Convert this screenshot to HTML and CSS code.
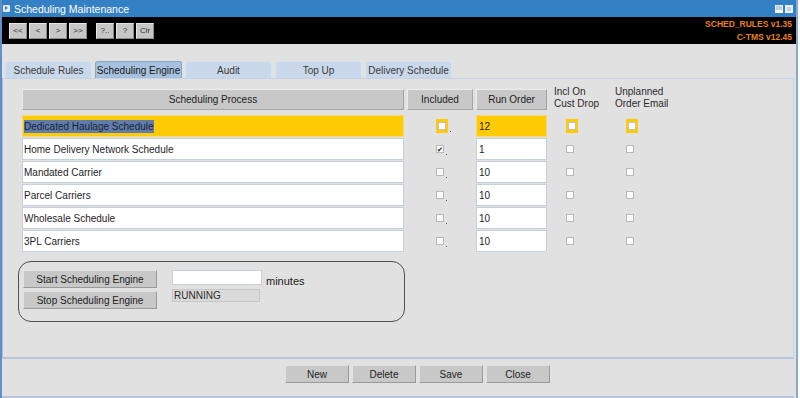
FILE: index.html
```html
<!DOCTYPE html>
<html lang="en">

<head>
    <meta charset="UTF-8">
    <meta name="viewport" content="width=device-width, initial-scale=1.0">
    <title>Scheduling Maintenance</title>
    <link rel="stylesheet" href="styles.css">
</head>

<body>

    <div class="window">
        <div class="titlebar">
            <span class="app-icon"><span class="app-arrow"></span></span>
            <span class="title">Scheduling Maintenance</span>
            <span class="controls">
                <span class="ctl ctl-min"></span>
                <span class="ctl ctl-max"></span>
            </span>
        </div>

        <div class="toolbar">
            <div class="tool-group">
                <button class="tool">&lt;&lt;</button>
                <button class="tool">&lt;</button>
                <button class="tool">&gt;</button>
                <button class="tool">&gt;&gt;</button>
            </div>
            <div class="tool-group">
                <button class="tool">?..</button>
                <button class="tool">?</button>
                <button class="tool">Clr</button>
            </div>
            <div class="version">
                <div>SCHED_RULES v1.35</div>
                <div>C-TMS v12.45</div>
            </div>
        </div>

        <div class="content">
            <div class="tabs">
                <div class="tab">Schedule Rules</div>
                <div class="tab active">Scheduling Engine</div>
                <div class="tab">Audit</div>
                <div class="tab">Top Up</div>
                <div class="tab">Delivery Schedule</div>
            </div>

            <div class="panel">
                <div class="grid">
                    <div class="head">Scheduling Process</div>
                    <div class="head">Included</div>
                    <div class="head">Run Order</div>
                    <div class="head-text incl">Incl On<br>Cust Drop</div>
                    <div class="head-text unpl">Unplanned<br>Order Email</div>

                    <div class="field current"><span class="selected">Dedicated Haulage Schedule</span></div>
                    <div class="cell-inc"><span class="check focus"></span><span class="dot"></span></div>
                    <div class="field num current">12</div>
                    <div class="cell-incl"><span class="check focus"></span></div>
                    <div class="cell-unpl"><span class="check focus"></span></div>

                    <div class="field">Home Delivery Network Schedule</div>
                    <div class="cell-inc"><span class="check ticked">&#10004;</span><span class="dot"></span></div>
                    <div class="field num">1</div>
                    <div class="cell-incl"><span class="check"></span></div>
                    <div class="cell-unpl"><span class="check"></span></div>

                    <div class="field">Mandated Carrier</div>
                    <div class="cell-inc"><span class="check"></span><span class="dot"></span></div>
                    <div class="field num">10</div>
                    <div class="cell-incl"><span class="check"></span></div>
                    <div class="cell-unpl"><span class="check"></span></div>

                    <div class="field">Parcel Carriers</div>
                    <div class="cell-inc"><span class="check"></span><span class="dot"></span></div>
                    <div class="field num">10</div>
                    <div class="cell-incl"><span class="check"></span></div>
                    <div class="cell-unpl"><span class="check"></span></div>

                    <div class="field">Wholesale Schedule</div>
                    <div class="cell-inc"><span class="check"></span><span class="dot"></span></div>
                    <div class="field num">10</div>
                    <div class="cell-incl"><span class="check"></span></div>
                    <div class="cell-unpl"><span class="check"></span></div>

                    <div class="field">3PL Carriers</div>
                    <div class="cell-inc"><span class="check"></span><span class="dot"></span></div>
                    <div class="field num">10</div>
                    <div class="cell-incl"><span class="check"></span></div>
                    <div class="cell-unpl"><span class="check"></span></div>
                </div>

                <!-- Engine control box -->
                <div class="engine">
                    <div class="engine-buttons">
                        <button class="btn wide">Start Scheduling Engine</button>
                        <button class="btn wide">Stop Scheduling Engine</button>
                    </div>
                    <div class="engine-fields">
                        <div class="minutes-row">
                            <div class="input"></div>
                            <span class="minutes">minutes</span>
                        </div>
                        <div class="status">RUNNING</div>
                    </div>
                </div>
            </div>

            <div class="actions">
                <button class="btn">New</button>
                <button class="btn">Delete</button>
                <button class="btn">Save</button>
                <button class="btn">Close</button>
            </div>
        </div>
    </div>

</body>

</html>
```

FILE: styles.css
```css
body {
    margin: 0;
    font-family: "Liberation Sans", Arial, sans-serif;
    font-size: 10px;
    color: #222;
    background-color: #ffffff;
}

.window {
    width: 798px;
    height: 398px;
    display: flex;
    flex-direction: column;
    box-sizing: border-box;
    border-left: 2px solid #5f8fc6;
    border-right: 2px solid #8aa9cf;
    background-color: #e1e1e1;
}

/* Title bar */
.titlebar {
    height: 17px;
    display: flex;
    align-items: center;
    background-color: #3380c4;
    color: #ffffff;
    padding: 0 3px 0 1px;
}

.app-icon {
    width: 7px;
    height: 7px;
    background-color: #dfeaf6;
    border-radius: 1px;
    position: relative;
    margin-right: 4px;
}

.app-arrow {
    position: absolute;
    left: 2px;
    top: 1px;
    border-left: 3px solid #3380c4;
    border-top: 2.5px solid transparent;
    border-bottom: 2.5px solid transparent;
}

.title {
    font-size: 10.5px;
    flex: 1;
}

.controls {
    display: flex;
    gap: 2px;
}

.ctl {
    width: 8px;
    height: 8px;
    box-sizing: border-box;
    background-color: #b9d1ea;
    border: 1px solid #e6eef8;
}

.ctl-min {
    border-bottom: 3px solid #ffffff;
}

.ctl-max {
    border: 2px solid #e6eef8;
}

/* Toolbar */
.toolbar {
    height: 27px;
    display: flex;
    align-items: center;
    background-color: #000000;
    padding: 0 4px 0 7px;
    gap: 9px;
}

.tool-group {
    display: flex;
    gap: 2px;
}

.tool {
    width: 18px;
    height: 16px;
    padding: 0;
    font-family: "Liberation Sans", Arial, sans-serif;
    font-size: 8px;
    color: #333;
    background-color: #c6c6c6;
    border: 1px solid #e4e4e4;
    border-right-color: #8c8c8c;
    border-bottom-color: #8c8c8c;
}

.version {
    margin-left: auto;
    text-align: right;
    color: #e8801f;
    font-size: 8.5px;
    font-weight: bold;
    line-height: 13px;
    padding-top: 1px;
}

/* Content */
.content {
    flex: 1;
    display: flex;
    flex-direction: column;
}

.tabs {
    display: flex;
    gap: 3px;
    padding: 17px 0 0 3px;
}

.tab {
    width: 87px;
    height: 17px;
    box-sizing: border-box;
    display: flex;
    align-items: center;
    justify-content: center;
    background-color: #c9d9eb;
    border: 1px solid #d8e3f0;
    border-bottom: none;
    border-radius: 3px 3px 0 0;
    color: #3a3a3a;
}

.tab.active {
    background-color: #a7c2df;
    border-color: #86a6cb;
    color: #1a1a1a;
}

.panel {
    height: 281px;
    box-sizing: border-box;
    margin-right: 2px;
    border-top: 1px solid #c3d2e4;
    border-left: 1px solid #a9bcd6;
    border-right: 1px solid #c3d2e4;
    border-bottom: 2px solid #b6c6dc;
    padding: 10px 0 0 19px;
}

.grid {
    display: grid;
    grid-template-columns: 382px 66px 71px 61px 64px;
    grid-template-rows: 21px repeat(6, 22px);
    column-gap: 3px;
    row-gap: 1px;
}

.head {
    display: flex;
    align-items: center;
    justify-content: center;
    background-color: #c8c8c8;
    border: 1px solid #ececec;
    border-right-color: #a4a4a4;
    border-bottom-color: #a4a4a4;
    height: 21px;
    box-sizing: border-box;
}

.head-text {
    line-height: 12px;
    margin-top: -3px;
    color: #2a2a2a;
}

.incl {
    padding-left: 4px;
}

.unpl {
    padding-left: 1px;
}

.field {
    display: flex;
    align-items: center;
    background-color: #ffffff;
    border: 1px solid #c7cfda;
    padding-left: 1px;
    color: #1e1e1e;
    margin-top: 4px;
    margin-bottom: -4px;
}

.field.current {
    background-color: #ffcb05;
    border-color: #f3d873;
}

.field.num {
    padding-left: 2px;
}

.selected {
    background-color: #5f7cab;
    color: #1c2436;
    padding: 1px 0;
}

.cell-inc,
.cell-incl,
.cell-unpl {
    display: flex;
    align-items: center;
    margin-top: 4px;
    margin-bottom: -4px;
}

.cell-inc {
    padding-left: 29px;
}

.cell-incl {
    padding-left: 16px;
}

.cell-unpl {
    padding-left: 12px;
}

.check {
    width: 8px;
    height: 8px;
    box-sizing: border-box;
    background-color: #fbfbfb;
    border: 1px solid #b8b8b8;
    display: flex;
    align-items: center;
    justify-content: center;
    font-size: 7px;
    line-height: 7px;
    color: #111;
}

.check.focus {
    width: 12px;
    height: 14px;
    border: 2px solid #ffcb05;
    border-top-width: 3px;
    border-bottom-width: 3px;
    box-shadow: inset 0 0 0 1px #c0c0c0;
}

.dot {
    width: 1px;
    height: 1px;
    background-color: #555;
    align-self: flex-end;
    margin: 0 0 5px 2px;
}

/* Engine control box */
.engine {
    width: 387px;
    height: 61px;
    box-sizing: border-box;
    margin: 13px 0 0 -4px;
    border: 1px solid #505050;
    border-radius: 13px;
    display: flex;
    padding: 8px 0 0 4px;
    gap: 15px;
}

.engine-buttons {
    display: flex;
    flex-direction: column;
    gap: 3px;
}

.btn {
    width: 64px;
    height: 18px;
    padding: 0;
    font-family: "Liberation Sans", Arial, sans-serif;
    font-size: 10px;
    color: #222;
    background-color: #c8c8c8;
    border: 1px solid #e2e2e2;
    border-right-color: #9a9a9a;
    border-bottom-color: #9a9a9a;
}

.btn.wide {
    width: 134px;
}

.engine-fields {
    display: flex;
    flex-direction: column;
    gap: 4px;
}

.minutes-row {
    display: flex;
    align-items: flex-end;
    gap: 4px;
}

.input {
    width: 90px;
    height: 15px;
    box-sizing: border-box;
    background-color: #ffffff;
    border: 1px solid #c7cfda;
}

.minutes {
    font-size: 11px;
    line-height: 11px;
    margin-bottom: -2px;
}

.status {
    width: 88px;
    height: 13px;
    box-sizing: border-box;
    background-color: #dadada;
    border: 1px solid #c6c6c6;
    line-height: 11px;
    padding-left: 1px;
    color: #2a2a2a;
}

.actions {
    flex: 1;
    display: flex;
    gap: 3px;
    padding: 6px 0 0 283px;
    margin-right: 2px;
    border-bottom: 2px solid #b6c6dc;
}
```
